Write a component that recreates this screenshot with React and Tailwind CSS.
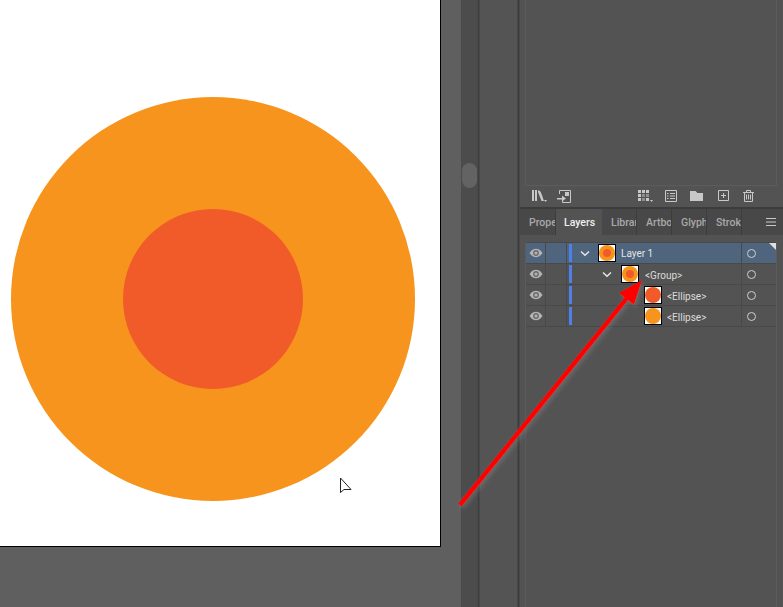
import React from "react";

function Eye() {
  return (
    <svg width="14" height="10" viewBox="0 0 14 10">
      <path d="M0.5 5C3 1.500 5 .8 7 .8S11 1.500 13.500 5C11 8.500 9 9.200 7 9.200S3 8.500 .5 5Z" fill="#b4b4b4" />
      <circle cx="7" cy="5" r="2.900" fill="#6a6a6a" />
      <circle cx="7" cy="5" r="1.500" fill="#b4b4b4" />
    </svg>
  );
}

function Chevron() {
  return (
    <svg width="10" height="7" viewBox="0 0 10 7">
      <path d="M1 1.500L5 5.200L9 1.500" fill="none" stroke="#e6e6e6" strokeWidth="1.500" />
    </svg>
  );
}

function Thumb({ kind }) {
  return (
    <div className="w-[18px] h-[18px] bg-white border border-black shrink-0 flex items-center justify-center">
      <svg width="16" height="16" viewBox="0 0 16 16">
        <circle cx="8" cy="8" r="8" fill={kind === "red" ? "#f15a29" : "#f7941d"} />
        {kind === "both" && <circle cx="8" cy="8" r="4" fill="#f15a29" />}
      </svg>
    </div>
  );
}

function LayerRow({ label, indent, gap, labelGap, chevron, kind, selected }) {
  return (
    <div className={`flex h-[21px] border-b border-[#494949] ${selected ? "bg-[#4f657d]" : "bg-[#535353]"}`}>
      <div className="w-[20px] flex items-center justify-center border-r border-[#494949]">
        <Eye />
      </div>
      <div className="w-[21px] border-r border-[#494949]" />
      <div className="flex-1 flex items-center pl-[2px]">
        <div className="w-[3px] h-[18px] bg-[#4f7fe8] shrink-0" />
        <div className={`flex items-center ${indent}`}>
          {chevron && <Chevron />}
          <div className={gap}>
            <Thumb kind={kind} />
          </div>
          <span className={`${labelGap} text-[10px] leading-none ${selected ? "mt-[2px] text-[#e4e4e4]" : "mt-[4px] text-[#dcdcdc]"}`}>{label}</span>
        </div>
      </div>
      <div className="w-[35px] flex items-center pl-[5px] border-l border-[#494949] relative">
        <div className="w-[9px] h-[9px] rounded-full border border-[#cfcfcf]" />
        {selected && (
          <svg className="absolute top-0 right-0" width="7" height="7" viewBox="0 0 7 7">
            <path d="M0 0H7V7Z" fill="#e0e0e0" />
          </svg>
        )}
      </div>
    </div>
  );
}

function Tab({ label, w, active }) {
  return (
    <div
      className={`flex items-center overflow-hidden pt-[1px] text-[10.500px] font-medium ${w} ${
        active ? "pl-[8px] bg-[#535353] text-[#f0f0f0]" : "pl-[9px] border-r border-[#3c3c3c] text-[#a8a8a8]"
      }`}
    >
      <span className="whitespace-nowrap">{label}</span>
    </div>
  );
}

export default function App() {
  return (
    <div className="relative flex w-[783px] h-[607px] overflow-hidden bg-[#535353] font-['Roboto',sans-serif]">
      {/* Canvas */}
      <div className="w-[461px] h-full bg-[#5f5f5f] shrink-0">
        <div className="w-[441px] h-[547px] bg-white border-r border-b border-black">
          <svg width="440" height="546" viewBox="0 0 440 546">
            <circle cx="213" cy="299" r="202" fill="#f7941d" />
            <circle cx="213" cy="299" r="90" fill="#f15a29" />
            <path d="M340.500 478V492.500L344 489.500L351 489.500Z" fill="#fff" stroke="#222" strokeWidth="1" />
          </svg>
        </div>
      </div>

      {/* Scroll strip */}
      <div className="w-[16px] h-full bg-[#4c4c4c] shrink-0 flex flex-col items-center pt-[163px]">
        <div className="w-[15px] h-[25px] rounded-full bg-[#636363]" />
      </div>
      <div className="w-[3px] h-full bg-[#3f3f3f] border-x border-[#484848] shrink-0" />
      <div className="w-[37px] h-full bg-[#545454] shrink-0" />
      <div className="w-[3px] h-full bg-[#3c3c3c] border-x border-[#484848] shrink-0" />

      {/* Panels */}
      <div className="flex-1 flex flex-col h-full min-w-0">
        <div className="h-[186px] px-[5px] bg-[#535353] shrink-0">
          <div className="h-full w-[252px] border-x border-b border-[#5c5c5c]" />
        </div>

        {/* Panel toolbar */}
        <div className="h-[22px] shrink-0 flex items-center pb-[2px] border-b border-[#3c3c3c]">
          <svg className="ml-[11px]" width="16" height="13" viewBox="0 0 16 13">
            <path d="M1 1H3V12H1ZM4 1H6V12H4ZM7 1.500C9 1 10 2.500 13 12H10.500L7 3Z" fill="#c8c8c8" />
            <path d="M13 11H16L14.500 13Z" fill="#c8c8c8" />
          </svg>
          <svg className="ml-[10px]" width="14" height="14" viewBox="0 0 14 14">
            <path d="M2.500 5V1.500H13.500V13.500H5.500V11" fill="none" stroke="#c8c8c8" />
            <path d="M0 9H5V6.500L9 9.500L5 12.500V10.500H0Z" fill="#c8c8c8" />
            <path d="M8 3H12V7H8Z" fill="#c8c8c8" />
          </svg>
          <svg className="ml-[67px]" width="15" height="13" viewBox="0 0 15 13">
            <path d="M0 1H3V4H0ZM4 1H7V4H4ZM8 1H11V4H8ZM0 5H3V8H0ZM0 9H3V12H0ZM8 9H11V12H8Z" fill="#c8c8c8" />
            <path d="M4 5H7V8H4ZM8 5H11V8H8ZM4 9H7V12H4Z" fill="#8e8e8e" />
            <path d="M12 11H15L13.500 13Z" fill="#c8c8c8" />
          </svg>
          <svg className="ml-[12px]" width="12" height="12" viewBox="0 0 12 12">
            <path d="M.5 .5H11.500V11.500H.5Z" fill="none" stroke="#c8c8c8" />
            <path d="M2 3H3.500V4H2ZM5 3H10V4H5ZM2 5.500H3.500V6.500H2ZM5 5.500H10V6.500H5ZM2 8H3.500V9H2ZM5 8H10V9H5Z" fill="#c8c8c8" />
          </svg>
          <svg className="ml-[13px]" width="13" height="10" viewBox="0 0 13 10">
            <path d="M0 0H5.500L7.500 2H13V10H0Z" fill="#c8c8c8" />
          </svg>
          <svg className="ml-[15px]" width="11" height="11" viewBox="0 0 11 11">
            <path d="M.5 .5H10.500V10.500H.5Z" fill="none" stroke="#c8c8c8" />
            <path d="M5 3H6V5H8V6H6V8H5V6H3V5H5Z" fill="#c8c8c8" />
          </svg>
          <svg className="ml-[14px]" width="11" height="12" viewBox="0 0 11 12">
            <path d="M0 2.500H11M3.500 2.500V.5H7.500V2.500M1.500 2.500V11.500H9.500V2.500M3.500 4.500V9.500M5.500 4.500V9.500M7.500 4.500V9.500" fill="none" stroke="#c8c8c8" />
          </svg>
        </div>

        {/* Tabs */}
        <div className="h-[27px] shrink-0 flex bg-[#484848] border-t border-[#3c3c3c]">
          <Tab label="Prope" w="w-[36px]" />
          <Tab label="Layers" w="w-[46px]" active />
          <Tab label="Librar" w="w-[35px]" />
          <Tab label="Artbo" w="w-[35px]" />
          <Tab label="Glyph" w="w-[35px]" />
          <Tab label="Strok" w="w-[35px]" />
          <div className="flex-1 flex items-center justify-end pr-[7px]">
            <svg width="10" height="8" viewBox="0 0 10 8">
              <path d="M0 .5H10M0 4H10M0 7.500H10" stroke="#c8c8c8" />
            </svg>
          </div>
        </div>

        {/* Layers list */}
        <div className="flex-1 min-h-0 pl-[5px] pt-[7px] bg-[#535353]">
          <div className="w-[252px] h-full border-x border-[#5c5c5c]">
            <div className="border-t border-[#494949]">
              <LayerRow label="Layer 1" indent="pl-[8px]" gap="ml-[8px]" labelGap="ml-[5px]" chevron kind="both" selected />
              <LayerRow label="<Group>" indent="pl-[30px]" gap="ml-[9px]" labelGap="ml-[6px]" chevron kind="both" />
              <LayerRow label="<Ellipse>" indent="pl-[72px]" labelGap="ml-[5px]" kind="red" />
              <LayerRow label="<Ellipse>" indent="pl-[72px]" labelGap="ml-[5px]" kind="orange" />
            </div>
          </div>
        </div>
      </div>

      {/* Red annotation arrow */}
      <svg className="absolute inset-0 pointer-events-none" width="783" height="607" viewBox="0 0 783 607">
        <defs>
          <filter id="arrowShadow" x="-20%" y="-20%" width="140%" height="140%">
            <feDropShadow dx="2" dy="2" stdDeviation="2" floodColor="#8a8a8a" floodOpacity="0.45" />
          </filter>
        </defs>
        <g filter="url(#arrowShadow)">
          <path d="M460 505L627 298" stroke="#fe0000" strokeWidth="4.500" />
          <path d="M642 280L634 305L619 293Z" fill="#fe0000" />
        </g>
      </svg>
    </div>
  );
}
